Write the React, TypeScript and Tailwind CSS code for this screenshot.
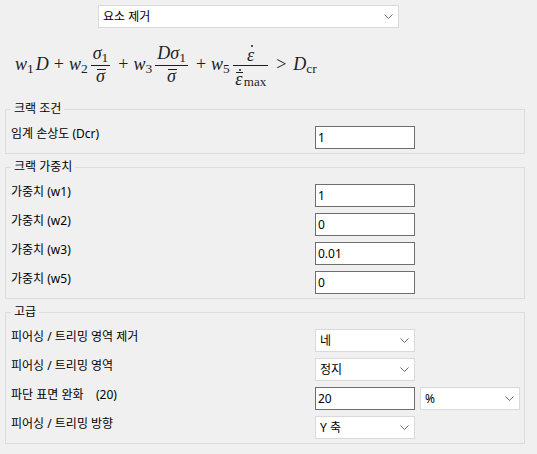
import React from "react";

function Chevron() {
  return (
    <svg width="9" height="5" viewBox="0 0 9 5" className="shrink-0">
      <path d="M0.5 0.5 L4.5 4.5 L8.5 0.5" fill="none" stroke="#6b6b6b" strokeWidth="1" />
    </svg>
  );
}

function Select({ value, className }: { value: string; className: string }) {
  return (
    <div
      className={`flex items-center h-[23px] bg-white border border-[#d9d9d9] pl-[4px] pr-[5px] text-[12px] leading-[16px] text-black ${className}`}
    >
      <span className="flex-1 whitespace-pre">{value}</span>
      <Chevron />
    </div>
  );
}

function Field({ value }: { value: string }) {
  return (
    <div className="flex items-center h-[23px] w-[100px] bg-white border border-[#6e6e6e] pl-[2px] text-[12px] leading-[16px] text-black">
      {value}
    </div>
  );
}

function Row({ label, children }: { label: string; children: React.ReactNode }) {
  return (
    <div className="flex items-start">
      <div className="w-[304px] text-[12px] leading-[16px] text-black whitespace-pre">{label}</div>
      <div className="flex gap-[5px]">{children}</div>
    </div>
  );
}

function Group({ title, children }: { title: string; children: React.ReactNode }) {
  return (
    <fieldset className="ml-[5px] mr-[12px] border border-[#dcdcdc] pl-[5px] pt-[9px] pb-[4px] flex flex-col gap-[6px]">
      <legend className="px-[3px] text-[12px] leading-[16px] text-black">{title}</legend>
      {children}
    </fieldset>
  );
}

function Frac({ num, den }: { num: React.ReactNode; den: React.ReactNode }) {
  return (
    <span className="inline-flex flex-col items-center mx-[3px]">
      <span className="flex items-end justify-center h-[18px] px-[2px] leading-[18px]">{num}</span>
      <span className="block self-stretch h-[1px] mt-[3px] bg-[#1e1e1e]" />
      <span className="flex items-start justify-center h-[20px] px-[2px] pt-[3px]">{den}</span>
    </span>
  );
}

// sigma with a bar over it
function SigmaBar() {
  return (
    <span className="inline-flex flex-col items-center">
      <span className="block w-[9px] h-[1px] ml-[2px] bg-[#1e1e1e]" />
      <i className="leading-[13px]">σ</i>
    </span>
  );
}

// epsilon with a dot accent drawn above it
function EpsDot() {
  return (
    <span className="inline-flex flex-col items-center">
      <span className="block w-[2px] h-[2px] ml-[2px] mb-[2px] rounded-full bg-[#1e1e1e]" />
      <i className="leading-[13px]">ε</i>
    </span>
  );
}

// epsilon with a bar and a dot above it
function EpsBarDot() {
  return (
    <span className="inline-flex flex-col items-center">
      <span className="block w-[2px] h-[2px] ml-[2px] mb-[1px] rounded-full bg-[#1e1e1e]" />
      <span className="block w-[7px] h-[1px] ml-[1px] bg-[#1e1e1e]" />
      <i className="leading-[12px]">ε</i>
    </span>
  );
}

function Op({ children }: { children: React.ReactNode }) {
  return <span className="mx-[5px] not-italic">{children}</span>;
}

function Formula() {
  return (
    <div className="h-[73px] flex items-center pl-[15px] font-['Liberation_Serif',serif] text-[18px] text-[#1e1e1e]">
      <span>
        <i>w</i>
        <sub>1</sub>
        <i className="ml-[2px]">D</i>
      </span>
      <Op>+</Op>
      <span>
        <i>w</i>
        <sub>2</sub>
      </span>
      <Frac
        num={
          <span>
            <i>σ</i>
            <sub>1</sub>
          </span>
        }
        den={<SigmaBar />}
      />
      <Op>+</Op>
      <span>
        <i>w</i>
        <sub>3</sub>
      </span>
      <Frac
        num={
          <span>
            <i>Dσ</i>
            <sub>1</sub>
          </span>
        }
        den={<SigmaBar />}
      />
      <Op>+</Op>
      <span>
        <i>w</i>
        <sub>5</sub>
      </span>
      <Frac
        num={<EpsDot />}
        den={
          <span className="inline-flex items-end">
            <EpsBarDot />
            <span className="text-[13px] leading-[13px] ml-[1px] translate-y-[3px]">max</span>
          </span>
        }
      />
      <span className="ml-[5px] mr-[7px]">&gt;</span>
      <span>
        <i>D</i>
        <sub>cr</sub>
      </span>
    </div>
  );
}

export default function App() {
  return (
    <div className="w-[537px] h-[454px] overflow-hidden bg-[#f0f0f0] font-['Noto_Sans','Noto_Sans_CJK_KR',sans-serif] pt-[5px]">
      <Select value="요소 제거" className="ml-[98px] w-[301px]" />
      <Formula />
      <Group title="크랙 조건">
        <Row label="임계 손상도 (Dcr)">
          <Field value="1" />
        </Row>
      </Group>
      <div className="h-[5px]" />
      <Group title="크랙 가중치">
        <Row label="가중치 (w1)">
          <Field value="1" />
        </Row>
        <Row label="가중치 (w2)">
          <Field value="0" />
        </Row>
        <Row label="가중치 (w3)">
          <Field value="0.01" />
        </Row>
        <Row label="가중치 (w5)">
          <Field value="0" />
        </Row>
      </Group>
      <div className="h-[5px]" />
      <Group title="고급">
        <Row label="피어싱 / 트리밍 영역 제거">
          <Select value="네" className="w-[100px]" />
        </Row>
        <Row label="피어싱 / 트리밍 영역">
          <Select value="정지" className="w-[100px]" />
        </Row>
        <Row label="파단 표면 완화    (20)">
          <Field value="20" />
          <Select value="%" className="w-[100px]" />
        </Row>
        <Row label="피어싱 / 트리밍 방향">
          <Select value="Y 축" className="w-[100px]" />
        </Row>
      </Group>
    </div>
  );
}
